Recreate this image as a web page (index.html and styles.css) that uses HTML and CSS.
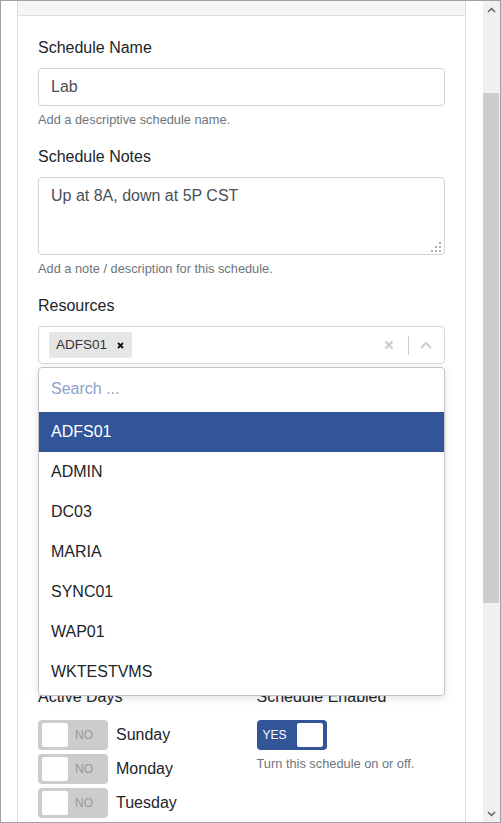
FILE: index.html
```html
<!DOCTYPE html>
<html lang="en">
<head>
<meta charset="utf-8">
<title>Schedule</title>
<link rel="stylesheet" href="styles.css">
</head>
<body>
<div class="window">
  <div class="viewport">
    <div class="panel">
      <div class="panel-header"></div>
      <div class="panel-body">
        <div class="group">
          <label class="label">Schedule Name</label>
          <div class="input">Lab</div>
          <div class="help">Add a descriptive schedule name.</div>
        </div>
        <div class="group">
          <label class="label">Schedule Notes</label>
          <div class="textarea">Up at 8A, down at 5P CST
            <svg class="resizer" width="10" height="10" viewBox="0 0 10 10"><rect x="8" y="0" width="2" height="2"/><rect x="4" y="4" width="2" height="2"/><rect x="8" y="4" width="2" height="2"/><rect x="0" y="8" width="2" height="2"/><rect x="4" y="8" width="2" height="2"/><rect x="8" y="8" width="2" height="2"/></svg>
          </div>
          <div class="help">Add a note / description for this schedule.</div>
        </div>
        <div class="group">
          <label class="label">Resources</label>
          <div class="select-wrap">
            <div class="select">
              <span class="chip">ADFS01<svg class="chip-x" width="7" height="7" viewBox="0 0 7 7"><path d="M1 1L6 6M6 1L1 6"/></svg></span>
              <span class="fill"></span>
              <svg class="clear" width="10" height="10" viewBox="0 0 10 10"><path d="M1.5 1.5L8.5 8.5M8.5 1.5L1.5 8.5"/></svg>
              <span class="sep"></span>
              <svg class="chev" width="12" height="8" viewBox="0 0 12 8"><path d="M1 7L6 2L11 7"/></svg>
            </div>
            <div class="menu">
              <div class="search">Search ...</div>
              <div class="option active">ADFS01</div>
              <div class="option">ADMIN</div>
              <div class="option">DC03</div>
              <div class="option">MARIA</div>
              <div class="option">SYNC01</div>
              <div class="option">WAP01</div>
              <div class="option">WKTESTVMS</div>
            </div>
          </div>
        </div>
        <div class="row row-days">
          <div class="group">
            <label class="label label-toggles">Active Days</label>
            <div class="days">
              <div class="day"><span class="toggle off"><span class="knob"></span><span class="tlabel">NO</span></span><span class="dayname">Sunday</span></div>
              <div class="day"><span class="toggle off"><span class="knob"></span><span class="tlabel">NO</span></span><span class="dayname">Monday</span></div>
              <div class="day"><span class="toggle off"><span class="knob"></span><span class="tlabel">NO</span></span><span class="dayname">Tuesday</span></div>
            </div>
          </div>
          <div class="group">
            <label class="label label-toggles">Schedule Enabled</label>
            <span class="toggle on"><span class="tlabel">YES</span><span class="knob"></span></span>
            <div class="help">Turn this schedule on or off.</div>
          </div>
        </div>
      </div>
    </div>
  </div>
  <div class="scrollbar">
    <div class="sb-btn"><svg width="9" height="6" viewBox="0 0 9 6"><path d="M1 5L4.5 1.5L8 5"/></svg></div>
    <div class="sb-track"><div class="sb-thumb"></div></div>
    <div class="sb-btn"><svg width="9" height="6" viewBox="0 0 9 6"><path d="M1 1L4.5 4.5L8 1"/></svg></div>
  </div>
</div>
</body>
</html>
```
FILE: styles.css
```css
html, body {
  margin: 0;
  padding: 0;
  background: #fff;
}
body {
  font-family: "Liberation Sans", Arial, sans-serif;
  font-size: 16px;
  line-height: 1.5;
  color: #212529;
}
.window {
  width: 501px;
  height: 823px;
  box-sizing: border-box;
  border: 1px solid #a0a0a0;
  display: flex;
  overflow: hidden;
}
.viewport {
  flex: 1;
  overflow: hidden;
  background: #fff;
}
.panel {
  margin-left: 16px;
  width: 449px;
  box-sizing: border-box;
  border-left: 1px solid #dddddd;
  border-right: 1px solid #dddddd;
}
.panel-header {
  height: 14px;
  background: #f5f5f5;
  border-bottom: 1px solid #dddddd;
}
.panel-body {
  padding: 20px 20px;
}
.group {
  margin-bottom: 16px;
}
.label {
  display: block;
  margin-bottom: 8px;
  line-height: 24px;
}
.label-toggles {
  margin-bottom: 11px;
}
.input {
  height: 38px;
  box-sizing: border-box;
  border: 1px solid #ced4da;
  border-radius: 4px;
  padding: 6px 12px;
  line-height: 24px;
  color: #495057;
}
.textarea {
  position: relative;
  height: 78px;
  box-sizing: border-box;
  border: 1px solid #ced4da;
  border-radius: 4px;
  padding: 6px 12px;
  line-height: 24px;
  color: #495057;
}
.resizer {
  position: absolute;
  right: 3px;
  bottom: 2px;
  fill: #b0b0b0;
}
.help {
  margin-top: 4px;
  font-size: 12.8px;
  line-height: 19.2px;
  color: #6c757d;
}
.select-wrap {
  position: relative;
}
.select {
  height: 38px;
  box-sizing: border-box;
  border: 1px solid #d6d6d6;
  border-radius: 4px;
  display: flex;
  align-items: center;
  padding-left: 10px;
}
.chip {
  display: flex;
  align-items: center;
  height: 26px;
  background: #e6e6e6;
  border-radius: 2px;
  padding: 0 8px 0 7px;
  font-size: 13.5px;
  color: #333;
}
.chip-x {
  margin-left: 10px;
  stroke: #111;
  stroke-width: 1.8;
  fill: none;
}
.fill {
  flex: 1;
}
.clear {
  stroke: #cccccc;
  stroke-width: 2.4;
  fill: none;
}
.sep {
  width: 1px;
  height: 19px;
  background: #cccccc;
  margin-left: 14px;
}
.chev {
  margin-left: 11px;
  margin-right: 12px;
  stroke: #cccccc;
  stroke-width: 2;
  fill: none;
}
.menu {
  position: absolute;
  left: 0;
  right: 0;
  top: 41px;
  z-index: 5;
  background: #fff;
  border: 1px solid #c4c4c4;
  border-radius: 4px;
  box-shadow: 0 2px 8px rgba(0, 0, 0, 0.12);
  padding-bottom: 3px;
}
.search {
  height: 44px;
  line-height: 42px;
  padding: 0 12px;
  color: #8ca1cb;
}
.option {
  height: 40px;
  line-height: 40px;
  padding: 0 12px;
  color: #212529;
}
.option.active {
  background: #32559a;
  color: #fff;
}
.row {
  display: grid;
  grid-template-columns: 1fr 1fr;
  column-gap: 30px;
}
.row-days {
  margin-top: 321px;
}
.days {
  display: flex;
  flex-direction: column;
  gap: 4px;
}
.day {
  display: flex;
  align-items: center;
  gap: 8px;
}
.toggle {
  display: flex;
  align-items: center;
  width: 70px;
  height: 30px;
  box-sizing: border-box;
  border-radius: 4px;
  padding: 3px 4px;
  font-size: 12px;
}
.toggle.off {
  background: #cccccc;
}
.toggle.on {
  background: #32559a;
}
.knob {
  width: 26px;
  height: 24px;
  background: #fff;
  border-radius: 2px;
}
.toggle.off .tlabel {
  flex: 1;
  text-align: center;
  padding-right: 4px;
  color: #999999;
}
.toggle.on .tlabel {
  flex: 1;
  padding-left: 2px;
  color: #fff;
}
.dayname {
  line-height: 30px;
}
.scrollbar {
  width: 17px;
  display: flex;
  flex-direction: column;
  background: #f0f0f0;
}
.sb-btn {
  height: 17px;
  display: flex;
  align-items: center;
  justify-content: center;
}
.sb-btn svg {
  stroke: #606060;
  stroke-width: 1.5;
  fill: none;
}
.sb-track {
  flex: 1;
}
.sb-thumb {
  margin: 75px 1px 0 0;
  height: 510px;
  background: #cdcdcd;
}
```
